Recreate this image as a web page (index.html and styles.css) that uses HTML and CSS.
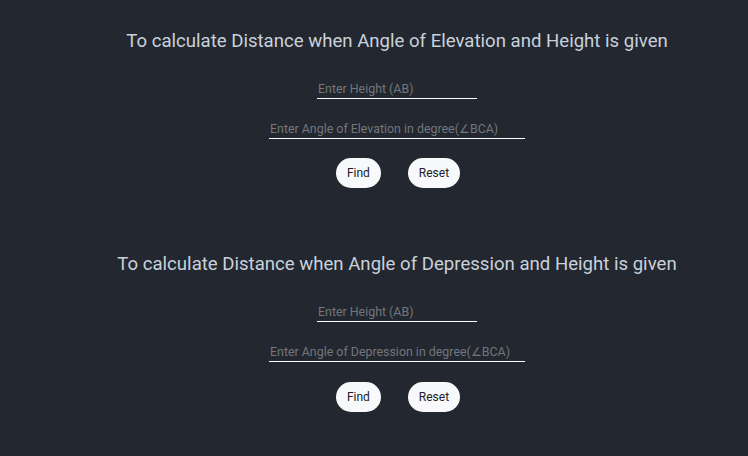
FILE: index.html
```html
<!DOCTYPE html>
<html>
<head>
<meta charset="utf-8">
<link rel="stylesheet" href="styles.css">
</head>
<body>
<section class="calc">
  <h2 class="title">To calculate Distance when Angle of Elevation and Height is given</h2>
  <input class="field short" type="text" placeholder="Enter Height (AB)">
  <input class="field long" type="text" placeholder="Enter Angle of Elevation in degree(∠BCA)">
  <div class="actions">
    <button class="btn">Find</button>
    <button class="btn">Reset</button>
  </div>
</section>
<section class="calc">
  <h2 class="title">To calculate Distance when Angle of Depression and Height is given</h2>
  <input class="field short" type="text" placeholder="Enter Height (AB)">
  <input class="field long" type="text" placeholder="Enter Angle of Depression in degree(∠BCA)">
  <div class="actions">
    <button class="btn">Find</button>
    <button class="btn">Reset</button>
  </div>
</section>
</body>
</html>
```
FILE: styles.css
```css
html, body {
  margin: 0;
  padding: 0;
  background: #23272f;
  height: 100%;
}
body {
  font-family: Roboto, "Open Sans", sans-serif;
  color: #c9d1dc;
  padding-left: 46px;
  box-sizing: border-box;
}
.calc {
  display: flex;
  flex-direction: column;
  align-items: center;
  padding-top: 29px;
  padding-bottom: 35px;
}
.title {
  margin: 0 0 27px;
  font-size: 18.6px;
  font-weight: 400;
  line-height: 24px;
  color: #c9d1dc;
  white-space: nowrap;
}
.field {
  display: block;
  background: transparent;
  border: none;
  border-bottom: 1px solid #ffffff;
  outline: none;
  color: #e6e6e6;
  font-family: inherit;
  font-size: 12.4px;
  padding: 2px 1px 3px;
  height: 19px;
  box-sizing: border-box;
  margin-bottom: 21px;
}
.field::placeholder {
  color: #72767d;
}
.short { width: 160px; }
.long { width: 256px; }
.actions {
  display: flex;
  gap: 27px;
  margin-top: -2px;
  padding-left: 2px;
}
.btn {
  background: #f8f9fb;
  border: none;
  border-radius: 15px;
  height: 30px;
  padding: 0 11px;
  font-family: inherit;
  font-size: 12px;
  color: #202124;
}
.calc + .calc .actions {
  margin-top: -1px;
}
```
